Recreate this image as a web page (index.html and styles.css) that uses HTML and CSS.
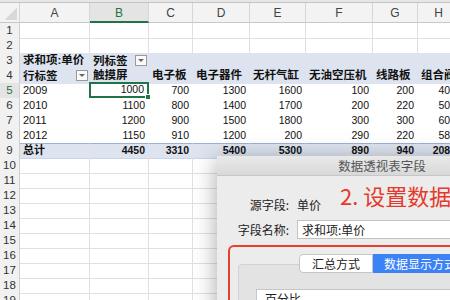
FILE: index.html
```html
<!DOCTYPE html>
<html lang="zh-CN">
<head>
    <meta charset="UTF-8">
    <title>数据透视表</title>
    <link rel="stylesheet" href="styles.css">
</head>
<body>
    <div id="app">
        <div class="topbar"></div>

        <div class="sheet">
            <div class="row colhead">
                <div class="corner"></div>
                <div class="ch">A</div>
                <div class="ch sel">B</div>
                <div class="ch">C</div>
                <div class="ch">D</div>
                <div class="ch">E</div>
                <div class="ch">F</div>
                <div class="ch">G</div>
                <div class="ch">H</div>
                <div class="ch"></div>
            </div>

            <div class="row"><div class="rh">1</div><div class="c"></div><div class="c"></div><div class="c"></div><div class="c"></div><div class="c"></div><div class="c"></div><div class="c"></div><div class="c"></div><div class="c"></div></div>
            <div class="row"><div class="rh">2</div><div class="c"></div><div class="c"></div><div class="c"></div><div class="c"></div><div class="c"></div><div class="c"></div><div class="c"></div><div class="c"></div><div class="c"></div></div>

            <!-- 透视表 -->
            <div class="row pv-head">
                <div class="rh">3</div>
                <div class="c b">求和项:单价</div>
                <div class="c b drop">列标签<span class="dd"></span></div>
                <div class="c"></div><div class="c"></div><div class="c"></div><div class="c"></div><div class="c"></div><div class="c"></div><div class="c"></div>
            </div>
            <div class="row pv-head">
                <div class="rh">4</div>
                <div class="c b drop">行标签<span class="dd"></span></div>
                <div class="c b">触摸屏</div>
                <div class="c b">电子板</div>
                <div class="c b">电子器件</div>
                <div class="c b">无杆气缸</div>
                <div class="c b">无油空压机</div>
                <div class="c b">线路板</div>
                <div class="c b">组合阀</div>
                <div class="c"></div>
            </div>
            <div class="row pv">
                <div class="rh cur-row">5</div>
                <div class="c">2009</div>
                <div class="c n cur">1000</div>
                <div class="c n">700</div><div class="c n">1300</div><div class="c n">1600</div><div class="c n">100</div><div class="c n">200</div><div class="c n">400</div><div class="c"></div>
            </div>
            <div class="row pv">
                <div class="rh">6</div>
                <div class="c">2010</div>
                <div class="c n">1100</div>
                <div class="c n">800</div><div class="c n">1400</div><div class="c n">1700</div><div class="c n">200</div><div class="c n">220</div><div class="c n">500</div><div class="c"></div>
            </div>
            <div class="row pv">
                <div class="rh">7</div>
                <div class="c">2011</div>
                <div class="c n">1200</div>
                <div class="c n">900</div><div class="c n">1500</div><div class="c n">1800</div><div class="c n">300</div><div class="c n">300</div><div class="c n">600</div><div class="c"></div>
            </div>
            <div class="row pv">
                <div class="rh">8</div>
                <div class="c">2012</div>
                <div class="c n">1150</div>
                <div class="c n">910</div><div class="c n">1200</div><div class="c n">200</div><div class="c n">290</div><div class="c n">220</div><div class="c n">580</div><div class="c"></div>
            </div>
            <div class="row pv-total">
                <div class="rh">9</div>
                <div class="c b">总计</div>
                <div class="c n b">4450</div>
                <div class="c n b">3310</div><div class="c n b">5400</div><div class="c n b">5300</div><div class="c n b">890</div><div class="c n b">940</div><div class="c n b">2080</div><div class="c"></div>
            </div>

            <div class="row"><div class="rh">10</div><div class="c"></div><div class="c"></div><div class="c"></div><div class="c"></div><div class="c"></div><div class="c"></div><div class="c"></div><div class="c"></div><div class="c"></div></div>
            <div class="row"><div class="rh">11</div><div class="c"></div><div class="c"></div><div class="c"></div><div class="c"></div><div class="c"></div><div class="c"></div><div class="c"></div><div class="c"></div><div class="c"></div></div>
            <div class="row"><div class="rh">12</div><div class="c"></div><div class="c"></div><div class="c"></div><div class="c"></div><div class="c"></div><div class="c"></div><div class="c"></div><div class="c"></div><div class="c"></div></div>
            <div class="row"><div class="rh">13</div><div class="c"></div><div class="c"></div><div class="c"></div><div class="c"></div><div class="c"></div><div class="c"></div><div class="c"></div><div class="c"></div><div class="c"></div></div>
            <div class="row"><div class="rh">14</div><div class="c"></div><div class="c"></div><div class="c"></div><div class="c"></div><div class="c"></div><div class="c"></div><div class="c"></div><div class="c"></div><div class="c"></div></div>
            <div class="row"><div class="rh">15</div><div class="c"></div><div class="c"></div><div class="c"></div><div class="c"></div><div class="c"></div><div class="c"></div><div class="c"></div><div class="c"></div><div class="c"></div></div>
            <div class="row"><div class="rh">16</div><div class="c"></div><div class="c"></div><div class="c"></div><div class="c"></div><div class="c"></div><div class="c"></div><div class="c"></div><div class="c"></div><div class="c"></div></div>
            <div class="row"><div class="rh">17</div><div class="c"></div><div class="c"></div><div class="c"></div><div class="c"></div><div class="c"></div><div class="c"></div><div class="c"></div><div class="c"></div><div class="c"></div></div>
            <div class="row"><div class="rh">18</div><div class="c"></div><div class="c"></div><div class="c"></div><div class="c"></div><div class="c"></div><div class="c"></div><div class="c"></div><div class="c"></div><div class="c"></div></div>
            <div class="row"><div class="rh">19</div><div class="c"></div><div class="c"></div><div class="c"></div><div class="c"></div><div class="c"></div><div class="c"></div><div class="c"></div><div class="c"></div><div class="c"></div></div>
        </div>

        <!-- 对话框 -->
        <div class="dialog">
            <div class="dlg-title">数据透视表字段</div>
            <div class="dlg-body">
                <div class="form">
                    <div class="lbl">源字段:</div>
                    <div class="val">单价</div>
                    <div class="lbl">字段名称:</div>
                    <div class="val"><div class="input">求和项:单价</div></div>
                </div>
                <div class="redbox">
                    <div class="group">
                        <div class="seg">
                            <span class="seg-item">汇总方式</span>
                            <span class="seg-item on">数据显示方式</span>
                        </div>
                        <div class="select">百分比</div>
                    </div>
                </div>
            </div>
            <div class="note">2. 设置数据显示方式</div>
        </div>
    </div>
</body>
</html>
```

FILE: styles.css
```css
body {
    margin: 0;
    padding: 0;
    background: #ffffff;
    font-family: "Liberation Sans", "Noto Sans CJK SC", sans-serif;
    overflow: hidden;
}

#app {
    position: relative;
    width: 450px;
    height: 300px;
    overflow: hidden;
}

.topbar {
    height: 2px;
    background: #e6e6e6;
    border-bottom: 1px solid #c4c4c4;
}

/* 表格 */
.row {
    display: grid;
    grid-template-columns: 20px 70px 59px 44px 57px 56px 67px 45px 42px 60px;
    height: 15px;
}

.row > div {
    box-sizing: border-box;
    border-right: 1px solid #e0e0e0;
    border-bottom: 1px solid #e0e0e0;
    white-space: nowrap;
    overflow: hidden;
}

.colhead {
    height: 20px;
}

.colhead > div {
    background: #f3f3f3;
    border-right: 1px solid #d6d6d6;
    border-bottom: 1px solid #c8c8c8;
    color: #444;
    font-size: 12px;
    line-height: 20px;
    text-align: center;
}

.colhead .sel {
    background: #e4e4e4;
    color: #217346;
    border-bottom: 2px solid #217346;
}

.corner {
    background: #f3f3f3 linear-gradient(135deg, transparent 50%, #d8d8d8 50%) no-repeat right 2px bottom 2px / 13px 13px !important;
}

.row .rh {
    background: #f1f1f1;
    border-right: 1px solid #cfcfcf;
    border-bottom: 1px solid #dcdcdc;
    color: #333;
    font-size: 11.5px;
    line-height: 15px;
    text-align: center;
    overflow: visible;
}

.row .cur-row {
    color: #217346;
    background: #e4e4e4;
}

.c {
    font-size: 11px;
    line-height: 14px;
    padding: 0 3px;
    color: #111;
}

.c.n {
    text-align: right;
    font-size: 10.5px;
    padding-right: 3px;
}

.b {
    font-weight: bold;
}

.pv-head .c.b {
    font-size: 11.5px;
}

/* 透视表样式 */
.pv-head > .c,
.pv > .c,
.pv-total > .c {
    border-right-color: transparent;
}

.pv-head > .c {
    background: #dde4f0;
    border-bottom-color: #dde4f0;
}

.pv > .c {
    border-bottom-color: #ffffff;
}

.pv-total > .c {
    background: #dde4f0;
    border-top: 1px solid #9db1d4;
    border-bottom-color: #c9d4e6;
    line-height: 13px;
}

.drop {
    display: flex;
    justify-content: space-between;
    align-items: center;
    padding-right: 1px !important;
}

.dd {
    width: 12px;
    height: 11px;
    box-sizing: border-box;
    background: #fafafa;
    border: 1px solid #9a9a9a;
    position: relative;
}

.dd::after {
    content: "";
    position: absolute;
    left: 2px;
    top: 3px;
    border-left: 3px solid transparent;
    border-right: 3px solid transparent;
    border-top: 3px solid #666;
}

.row .cur {
    border: 2px solid #217346;
    position: relative;
    overflow: visible;
    line-height: 11px;
    margin-left: -1px;
    margin-top: -1px;
    height: 16px;
}

.cur::after {
    content: "";
    position: absolute;
    right: -4px;
    bottom: -4px;
    width: 4px;
    height: 4px;
    background: #217346;
    border: 1px solid #fff;
}

/* 对话框 */
.dialog {
    position: absolute;
    left: 217px;
    top: 156px;
    width: 330px;
    height: 170px;
    background: #ececec;
    box-shadow: 0 4px 22px rgba(0, 0, 0, 0.35);
    font-family: "Noto Sans CJK SC", sans-serif;
    color: #222;
}

.dlg-title {
    height: 19px;
    background: linear-gradient(#e9e9e9, #d9d9d9);
    border-bottom: 1px solid #c6c6c6;
    text-align: center;
    font-size: 12.5px;
    line-height: 19px;
    color: #555;
}

.dlg-body {
    padding-top: 20px;
}

.form {
    display: grid;
    grid-template-columns: 72px 1fr;
    column-gap: 8px;
    row-gap: 7px;
    align-items: center;
    font-size: 12px;
}

.lbl {
    text-align: right;
}

.input {
    height: 19px;
    box-sizing: border-box;
    background: #ffffff;
    border: 1px solid #c2c2c2;
    padding-left: 4px;
    line-height: 17px;
}

.redbox {
    margin: 6px 0 0 11px;
    height: 80px;
    border: 2px solid #e8402f;
    border-right: none;
    border-radius: 6px 0 0 0;
    padding: 17px 0 0 8px;
}

.group {
    position: relative;
    height: 60px;
    background: #e3e3e3;
    border: 1px solid #d2d2d2;
    border-radius: 4px;
}

.seg {
    position: absolute;
    left: 60px;
    top: -11px;
    display: flex;
    height: 19px;
    font-size: 12px;
    line-height: 19px;
}

.seg-item {
    padding: 0 12px;
    background: #ffffff;
    border: 1px solid #c6c6c6;
    border-radius: 4px 0 0 4px;
    line-height: 17px;
}

.seg-item.on {
    background: #3b82f6;
    border-color: #3b82f6;
    color: #ffffff;
    border-radius: 0;
    padding-left: 10px;
}

.select {
    position: absolute;
    left: 17px;
    top: 24px;
    width: 200px;
    height: 18px;
    background: #ffffff;
    border: 1px solid #c6c6c6;
    font-size: 12px;
    line-height: 18px;
    padding-left: 8px;
}

.note {
    position: absolute;
    left: 123px;
    top: 26px;
    font-size: 22px;
    line-height: 26px;
    color: #e4392b;
    white-space: nowrap;
}
```
